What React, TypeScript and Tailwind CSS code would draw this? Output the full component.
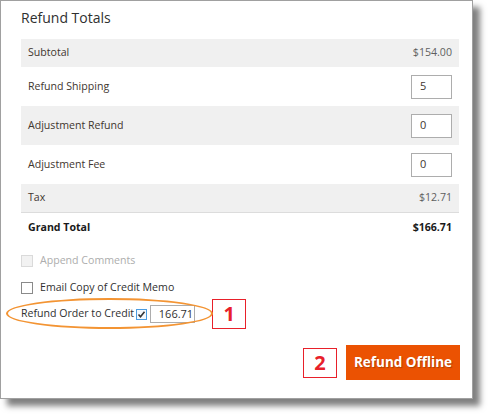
import React from 'react'

const font = { fontFamily: '"Open Sans", "Liberation Sans", sans-serif' }

function Row({
  label,
  gray,
  children,
  h,
  bold,
  border,
}: {
  label: string
  gray?: boolean
  children: React.ReactNode
  h: string
  bold?: boolean
  border?: boolean
}) {
  return (
    <div
      className={`flex items-center justify-between px-[7px] ${h} ${gray ? 'bg-[#f0f0f0]' : 'bg-white'} ${
        border ? 'border-b border-[#dcdcdc]' : ''
      } ${bold ? 'font-bold text-[#1a1a1a]' : 'text-[#41362f]'}`}
    >
      <span className="text-[10.6px]">{label}</span>
      {children}
    </div>
  )
}

function NumInput({ value }: { value: string }) {
  return (
    <div className="w-[41px] h-[24px] border border-[#adadad] bg-white flex items-center pl-[8px] text-[11px] text-[#41362f]">
      {value}
    </div>
  )
}

function Marker({ n }: { n: string }) {
  return (
    <div className="flex items-center justify-center w-[34px] h-[30px] border border-[#e8202a] text-[#e8202a] text-[20px] font-bold leading-none">
      {n}
    </div>
  )
}

export default function App() {
  return (
    <div className="w-[488px] h-[414px] bg-white" style={font}>
      <div className="w-[473px] h-[399px] border border-[#a0a0a0] bg-white pl-[20px] pr-[13px] shadow-[7px_7px_6px_rgba(0,0,0,0.5)] flex flex-col">
        <div className="h-[38px] pt-[6px] leading-[22px] text-[14px] text-[#303030]">Refund Totals</div>

        <div className="flex flex-col">
          <Row label="Subtotal" gray h="h-[28px]">
            <span className="text-[10.6px] text-[#5f5f5f]">$154.00</span>
          </Row>
          <Row label="Refund Shipping" h="h-[39px]">
            <NumInput value="5" />
          </Row>
          <Row label="Adjustment Refund" gray h="h-[39px]">
            <NumInput value="0" />
          </Row>
          <Row label="Adjustment Fee" h="h-[39px]">
            <NumInput value="0" />
          </Row>
          <Row label="Tax" gray h="h-[29px]" border>
            <span className="text-[10.6px] text-[#5f5f5f]">$12.71</span>
          </Row>
          <Row label="Grand Total" bold h="h-[30px]">
            <span className="text-[10.6px]">$166.71</span>
          </Row>
        </div>

        <div className="mt-[8px] h-[20px] flex items-center gap-[7px] text-[10.6px] text-[#adadad]">
          <span className="w-[12px] h-[12px] border border-[#dadada] bg-[#f2f2f2]" />
          Append Comments
        </div>

        <div className="mt-[7px] h-[20px] flex items-center gap-[7px] text-[10.6px] text-[#303030]">
          <span className="w-[12px] h-[12px] border border-[#8a8a8a] bg-white" />
          Email Copy of Credit Memo
        </div>

        <div className="relative h-[32px] flex items-center text-[10.6px] text-[#303030]">
          <div className="absolute left-[-15px] top-0 w-[207px] h-[31px] rounded-[50%] border-2 border-[#f39433]" />
          <span>Refund Order to Credit</span>
          <span className="ml-[2px] w-[11px] h-[11px] border border-[#4a9be0] bg-[#f4f8fc] flex items-center justify-center">
            <svg width="9" height="9" viewBox="0 0 9 9">
              <path d="M1.5 4.5 L3.5 6.8 L7.5 1.8" fill="none" stroke="#333" strokeWidth="1.6" />
            </svg>
          </span>
          <div className="ml-[3px] w-[45px] h-[18px] border border-[#adadad] bg-white flex items-center justify-end pr-[1px] text-[11px]">
            166.71
          </div>
          <div className="ml-[17px]">
            <Marker n="1" />
          </div>
        </div>

        <div className="mt-[15px] flex items-center justify-end gap-[9px] -mr-px">
          <Marker n="2" />
          <button
            className="w-[114px] h-[35px] bg-[#eb5202] text-white text-[13.5px] font-bold"
            style={{ textShadow: '1px 1px 1px rgba(0,0,0,0.25)' }}
          >
            Refund Offline
          </button>
        </div>
      </div>
    </div>
  )
}
